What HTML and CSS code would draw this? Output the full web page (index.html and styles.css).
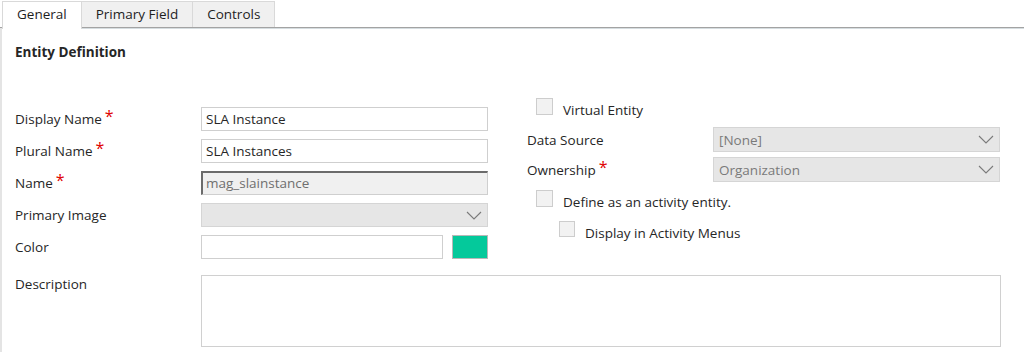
FILE: index.html
```html
<!DOCTYPE html>
<html lang="en">
<head>
    <meta charset="UTF-8">
    <title>Entity Definition</title>
    <link rel="stylesheet" href="styles.css">
</head>
<body>
    <div class="tabs">
        <div class="tab active">General</div>
        <div class="tab">Primary Field</div>
        <div class="tab">Controls</div>
    </div>

    <div class="panel">
        <h1 class="section-title">Entity Definition</h1>

        <div class="columns">
            <div class="col-left">
                <div class="row">
                    <label class="label">Display Name<span class="req">*</span></label>
                    <div class="input">SLA Instance</div>
                </div>
                <div class="row">
                    <label class="label">Plural Name<span class="req">*</span></label>
                    <div class="input">SLA Instances</div>
                </div>
                <div class="row">
                    <label class="label">Name<span class="req">*</span></label>
                    <div class="input readonly">mag_slainstance</div>
                </div>
                <div class="row">
                    <label class="label">Primary Image</label>
                    <div class="select">
                        <span></span>
                        <svg class="chevron" width="16" height="9" viewBox="0 0 16 9"><polyline points="1,1 8,8 15,1" fill="none" stroke="#7a7a7a" stroke-width="1.1"/></svg>
                    </div>
                </div>
                <div class="row">
                    <label class="label">Color</label>
                    <div class="color-pick">
                        <div class="input color-input"></div>
                        <div class="swatch"></div>
                    </div>
                </div>
            </div>

            <div class="col-right">
                <div class="check-row">
                    <span class="checkbox"></span>
                    <span class="check-text">Virtual Entity</span>
                </div>
                <div class="row row-right ds">
                    <label class="label">Data Source</label>
                    <div class="select">
                        <span>[None]</span>
                        <svg class="chevron" width="16" height="9" viewBox="0 0 16 9"><polyline points="1,1 8,8 15,1" fill="none" stroke="#7a7a7a" stroke-width="1.1"/></svg>
                    </div>
                </div>
                <div class="row row-right own">
                    <label class="label">Ownership<span class="req">*</span></label>
                    <div class="select">
                        <span>Organization</span>
                        <svg class="chevron" width="16" height="9" viewBox="0 0 16 9"><polyline points="1,1 8,8 15,1" fill="none" stroke="#7a7a7a" stroke-width="1.1"/></svg>
                    </div>
                </div>
                <div class="check-row activity">
                    <span class="checkbox"></span>
                    <span class="check-text">Define as an activity entity.</span>
                </div>
                <div class="check-row nested">
                    <span class="checkbox small"></span>
                    <span class="check-text">Display in Activity Menus</span>
                </div>
            </div>
        </div>

        <div class="row desc-row">
            <label class="label">Description</label>
            <div class="textarea"></div>
        </div>
    </div>
</body>
</html>
```

FILE: styles.css
```css
body {
    margin: 0;
    font-family: "Open Sans", "Noto Sans", Arial, sans-serif;
    font-size: 13.5px;
    color: #262626;
    background: #fff;
}
.tabs {
    display: flex;
    padding: 1px 0 0 2px;
    border-bottom: 1px solid #a3a3a3;
    box-shadow: 0 1px 0 #d6dde0;
    height: 26px;
}
.tab {
    padding: 0 14px;
    line-height: 25px;
    background: #f0f0f0;
    border: 1px solid #d9d9d9;
    border-bottom: none;
    margin-right: -1px;
    color: #1e1e1e;
}
.tab.active {
    background: #fff;
    height: 27px;
    position: relative;
    z-index: 1;
}
.panel {
    border-left: 2px solid #e4e4e4;
    height: 324px;
    padding-left: 13px;
}
.section-title {
    margin: 0;
    padding-top: 15px;
    font-size: 13.5px;
    font-weight: bold;
    line-height: 18px;
}
.columns {
    display: flex;
    align-items: flex-start;
    margin-top: 37px;
}
.col-left {
    width: 473px;
    padding-top: 9px;
    display: flex;
    flex-direction: column;
    gap: 8px;
}
.col-right {
    margin-left: 39px;
    width: 474px;
    display: flex;
    flex-direction: column;
}
.row {
    display: flex;
    align-items: center;
}
.label {
    width: 186px;
    flex-shrink: 0;
    align-self: center;
}
.req {
    color: #e00000;
    font-size: 16px;
    vertical-align: top;
    line-height: 12px;
    margin-left: 3px;
}
.input {
    box-sizing: border-box;
    width: 287px;
    height: 24px;
    border: 1px solid #cfcfcf;
    padding: 0 4px;
    line-height: 22px;
}
.input.readonly {
    background: #f0f0f0;
    color: #6f6f6f;
    border-top: 2px solid #6b6b6b;
    border-left: 2px solid #6b6b6b;
    line-height: 21px;
    padding-left: 3px;
}
.select {
    box-sizing: border-box;
    width: 287px;
    height: 24px;
    background: #e6e6e6;
    border: 1px solid #d5d5d5;
    color: #7a7a7a;
    display: flex;
    align-items: center;
    justify-content: space-between;
    padding: 0 5px;
}
.chevron {
    display: block;
}
.color-pick {
    display: flex;
    gap: 9px;
}
.color-input {
    width: 242px;
}
.swatch {
    box-sizing: border-box;
    width: 36px;
    height: 24px;
    background: #04c99b;
    border: 1px solid #b8b8b8;
}
.check-row {
    display: flex;
    align-items: flex-start;
    gap: 10px;
    padding-left: 9px;
    height: 18px;
}
.check-text {
    padding-top: 3px;
    line-height: 18px;
}
.checkbox {
    box-sizing: border-box;
    width: 17px;
    height: 17px;
    background: #f2f2f2;
    border: 1px solid #cdcdcd;
}
.checkbox.small {
    width: 16px;
    height: 16px;
}
.row-right .select {
    height: 25px;
}
.ds {
    margin-top: 11px;
}
.own {
    margin-top: 5px;
}
.activity {
    margin-top: 8px;
}
.nested {
    margin-top: 13px;
    padding-left: 32px;
}
.desc-row {
    margin-top: 16px;
    align-items: flex-start;
}
.desc-row .label {
    align-self: flex-start;
    padding-top: 0;
}
.textarea {
    box-sizing: border-box;
    width: 800px;
    height: 72px;
    border: 1px solid #d0d0d0;
}
```
